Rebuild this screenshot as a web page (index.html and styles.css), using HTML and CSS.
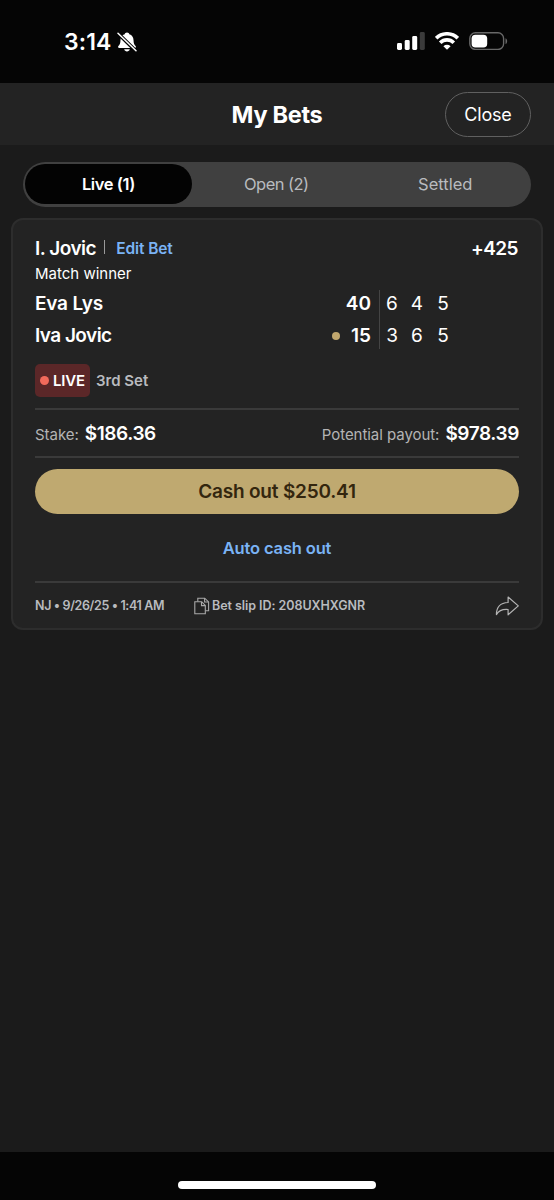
FILE: index.html
```html
<!DOCTYPE html>
<html lang="en">
<head>
<meta charset="utf-8">
<title>My Bets</title>
<link rel="stylesheet" href="styles.css">
</head>
<body>
<div class="screen">
  <div class="status">
    <div class="status-left">
      <span class="clock">3:14</span>
      <svg class="bell" width="20" height="20" viewBox="0 0 20 20">
        <path fill="#fff" d="M10 .6c1.300 0 2.100.8 2.300 1.700 2.800.8 4.100 3 4.200 5.700.1 3.500.7 4.800 2.100 6.100.6.6.3 1.900-.8 1.900H2.200c-1.100 0-1.400-1.300-.8-1.900 1.400-1.300 2-2.600 2.100-6.100.1-2.700 1.400-4.900 4.200-5.700C7.900 1.400 8.700.6 10 .6zM7.200 17.200h5.600c-.3 1.300-1.400 2.200-2.800 2.200s-2.500-.9-2.800-2.200z"/>
        <path stroke="#050505" stroke-width="3.600" d="M0 .4l19.500 19.200"/>
        <path stroke="#fff" stroke-width="1.500" stroke-linecap="round" d="M1 1.300l18 17.500"/>
      </svg>
    </div>
    <div class="status-right">
      <svg width="28" height="18" viewBox="0 0 28 18">
        <rect x="0" y="11" width="5" height="7" rx="1.400" fill="#fff"/>
        <rect x="7.700" y="8" width="5" height="10" rx="1.400" fill="#fff"/>
        <rect x="15.200" y="4" width="5" height="14" rx="1.400" fill="#fff"/>
        <rect x="22.800" y="0" width="5" height="18" rx="1.400" fill="#3b3b3b"/>
      </svg>
      <svg width="24" height="18" viewBox="0 0 24 18">
        <g fill="none" stroke="#fff" stroke-width="3.600">
          <path d="M1.200 6.200a15.400 15.400 0 0 1 21.600 0"/>
          <path d="M5.200 10.700a9.600 9.600 0 0 1 13.600 0"/>
        </g>
        <path fill="#fff" d="M12 17.800l-3.600-3.600a5.200 5.200 0 0 1 7.200 0z"/>
      </svg>
      <svg width="39" height="18" viewBox="0 0 39 18">
        <rect x=".8" y=".8" width="33.800" height="16.600" rx="5.600" fill="none" stroke="#686868" stroke-width="1.400"/>
        <rect x="2.600" y="2.700" width="15.600" height="12.900" rx="3.800" fill="#fff"/>
        <path d="M36.500 6.200c2.200.9 2.200 5 0 5.900z" fill="#686868"/>
      </svg>
    </div>
  </div>

  <header class="header">
    <h1 class="title">My Bets</h1>
    <button class="close">Close</button>
  </header>

  <main class="main">
    <nav class="tabs">
      <span class="tab tab-active">Live (1)</span>
      <span class="tab tab-open">Open (2)</span>
      <span class="tab tab-settled">Settled</span>
    </nav>

    <section class="card">
      <div class="bet-head">
        <span class="pick">I. Jovic</span>
        <span class="pipe"></span>
        <span class="edit">Edit Bet</span>
        <span class="odds">+425</span>
      </div>
      <div class="market">Match winner</div>

      <div class="score">
        <div class="names">
          <span class="player-a">Eva Lys</span>
          <span class="player-b">Iva Jovic</span>
        </div>
        <div class="points">
          <span>40</span>
          <span><i class="serve"></i>15</span>
        </div>
        <div class="sets">
          <span>6</span><span>4</span><span>5</span>
          <span>3</span><span>6</span><span>5</span>
        </div>
      </div>

      <div class="live-row">
        <span class="live"><i class="live-dot"></i>LIVE</span>
        <span class="period">3rd Set</span>
      </div>

      <div class="money">
        <div class="pair"><span class="label">Stake:</span><span class="amount">$186.36</span></div>
        <div class="pair"><span class="label">Potential payout:</span><span class="amount">$978.39</span></div>
      </div>

      <button class="cash">Cash out $250.41</button>
      <div class="auto"><span>Auto cash out</span></div>

      <footer class="foot">
        <span class="placed">NJ • 9/26/25 • 1:41 AM</span>
        <svg class="copy" width="16" height="18" viewBox="0 0 16 18" fill="none" stroke="#a9a9a9" stroke-width="1.100">
          <path d="M.8 4.800h6.900l3.600 3.600v8.300H.8z"/>
          <path d="M7.500 4.900v3.700h3.700"/>
          <path d="M3.800 4.600V1.200h6.900l3.900 3.700v8.900h-3.100"/>
          <path d="M10.600 1.300v3.700h3.900"/>
        </svg>
        <span class="slip">Bet slip ID: 208UXHXGNR</span>
        <svg class="share" width="24" height="20" viewBox="0 0 24 20" fill="none" stroke="#b4b4b4" stroke-width="1.200" stroke-linejoin="round">
          <path d="M13.100 1L23.300 9.900 13.100 18.800V13.500C7.600 13 3.900 14.400 1.400 18.600 1.400 10.800 6 6.800 13.100 6.500z"/>
        </svg>
      </footer>
    </section>
  </main>

  <div class="bottom"><div class="home"></div></div>
</div>
</body>
</html>
```

FILE: styles.css
```css
* { box-sizing: border-box; }
body { margin: 0; background: #1b1b1b; }
.screen {
  width: 554px; height: 1200px;
  display: flex; flex-direction: column;
  font-family: Inter, "Liberation Sans", sans-serif;
  color: #fff; white-space: nowrap;
}
button { font-family: inherit; padding: 0; margin: 0; cursor: pointer; }
.status {
  height: 83px; background: #050505;
  display: flex; justify-content: space-between; align-items: flex-start;
  padding: 32px 46px 0 64px;
}
.status-left { display: flex; align-items: center; gap: 6px; height: 19px; }
.clock { font-size: 23px; font-weight: 600; letter-spacing: .1px; line-height: 19px; padding-top: 1px; }
.status-right { display: flex; gap: 10px; }
.header {
  height: 62px; background: #232323;
  display: grid; grid-template-columns: 1fr auto 1fr; align-items: center;
  padding-right: 23px;
}
.title {
  grid-column: 2; margin: 0 0 0 23px; padding-top: 2px;
  font-size: 23.500px; font-weight: 700; line-height: 30px; letter-spacing: -.3px;
}
.close {
  justify-self: end; width: 86px; height: 45px; border-radius: 23px;
  border: 1.500px solid #606060; background: transparent; color: #fff;
  font-size: 18px; letter-spacing: -.2px; padding-top: 1px;
}
.main { flex: 1; background: #1b1b1b; padding: 17px 11px 0; }
.tabs {
  height: 45px; margin: 0 12px; padding: 2px 2px 3px; border-radius: 23px;
  background: #404040; display: grid; grid-template-columns: 167px 1fr 1fr;
}
.tab {
  display: flex; align-items: center; justify-content: center;
  font-size: 16.500px; color: #b9bbbf; border-radius: 21px;
}
.tab-active { background: #030303; color: #fff; font-weight: 600; letter-spacing: -.4px; }
.tab-open { letter-spacing: -.55px; }
.tab-settled { padding-left: 1px; }
.card {
  margin-top: 11px; height: 412px; border: 2px solid #2d2d2d; border-radius: 12px;
  background: #232323; padding: 16px 22px 0;
}
.bet-head { display: flex; align-items: center; height: 24px; }
.pick { font-size: 19px; font-weight: 600; letter-spacing: -.5px; }
.pipe { width: 1px; height: 14px; background: #9a9a9a; margin: -2px 11px 0 8px; }
.edit { font-size: 15.500px; font-weight: 600; color: #7ab3f5; letter-spacing: -.1px; }
.odds { margin: 0 1px 0 auto; font-size: 19px; font-weight: 600; letter-spacing: -.55px; }
.market { height: 20px; margin-top: 4px; font-size: 15px; line-height: 20px; }
.score { display: flex; height: 66px; margin-top: 3px; }
.names, .points { display: grid; grid-template-rows: 32.500px 32.500px; align-items: center; font-size: 19px; font-weight: 600; }
.names { width: 290px; }
.player-a { letter-spacing: -.2px; }
.player-b { letter-spacing: -.55px; }
.points { width: 54px; padding-right: 8px; justify-items: end; }
.points span { display: flex; align-items: center; }
.serve { width: 8px; height: 8px; border-radius: 4px; background: #c0a76e; margin-right: 11px; }
.sets {
  height: 59px; margin-top: 3px; border-left: 1px solid #444;
  display: grid; grid-template: 26px 38px / 24px 26px 26px;
  place-items: center; font-size: 19px;
}
.live-row { display: flex; align-items: center; height: 33px; margin-top: 11px; gap: 6px; }
.live {
  width: 55px; height: 33px; border-radius: 5px; background: #5b2728;
  display: flex; align-items: center; gap: 4px; padding-left: 5px;
  font-size: 15px; font-weight: 600; letter-spacing: -.15px;
}
.live-dot { width: 9px; height: 9px; border-radius: 50%; background: #f26a5b; }
.period { font-size: 15px; font-weight: 600; color: #b9bbbf; }
.money {
  margin-top: 11px; height: 50px; border: solid #3a3a3a; border-width: 2px 0;
  display: flex; justify-content: space-between; align-items: center;
}
.pair { display: flex; align-items: baseline; gap: 6px; }
.label { font-size: 15px; color: #b4b4b4; letter-spacing: -.05px; }
.amount { font-size: 19px; font-weight: 600; letter-spacing: -.4px; }
.cash {
  display: block; width: 100%; height: 45px; margin-top: 11px; border: 0; border-radius: 23px;
  background: #bfa970; color: #33260e; font-size: 19px; font-weight: 600; letter-spacing: -.2px;
}
.auto { height: 67px; display: flex; align-items: center; justify-content: center; font-size: 16.500px; font-weight: 600; letter-spacing: -.15px; color: #7ab3f5; }
.foot {
  border-top: 2px solid #3a3a3a; height: 47px; padding-top: 1px; display: flex; align-items: center;
  font-size: 12.500px; font-weight: 600; color: #b9bbbf;
}
.placed { width: 159px; letter-spacing: -.36px; padding-bottom: 1px; }
.slip { margin-left: 2px; letter-spacing: -.05px; padding-bottom: 1px; }
.share { margin-left: auto; }
.bottom { height: 48px; background: #050505; display: flex; justify-content: center; padding-top: 29px; }
.home { width: 198px; height: 8px; border-radius: 4px; background: #fff; }
```
